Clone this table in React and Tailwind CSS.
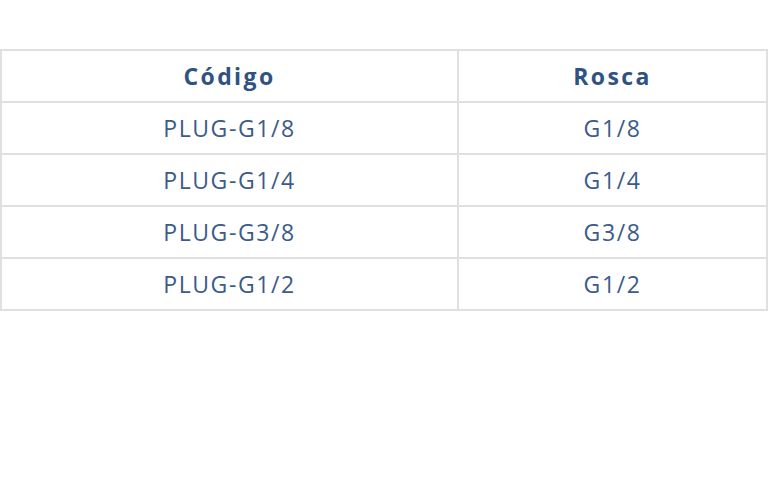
import React from 'react';

const rows = [
  ['PLUG-G1/8', 'G1/8'],
  ['PLUG-G1/4', 'G1/4'],
  ['PLUG-G3/8', 'G3/8'],
  ['PLUG-G1/2', 'G1/2'],
];

const App = () => {
  return (
    <div className="w-[768px] h-[497px] bg-white pt-[49px]" style={{ fontFamily: '"Open Sans", "Liberation Sans", sans-serif' }}>
      <table className="w-full border-collapse table-fixed">
        <colgroup>
          <col className="w-[457px]" />
          <col />
        </colgroup>
        <thead>
          <tr className="h-[52px]">
            <th className="border-2 border-[#e0e0e0] text-[23px] font-bold tracking-[2.4px] text-[#2f5283]">Código</th>
            <th className="border-2 border-[#e0e0e0] text-[23px] font-bold tracking-[2.4px] text-[#2f5283]">Rosca</th>
          </tr>
        </thead>
        <tbody>
          {rows.map(([code, thread]) => (
            <tr key={code} className="h-[52px]">
              <td className="border-2 border-[#e0e0e0] text-center text-[23px] tracking-[1.6px] text-[#3b5b8b]">{code}</td>
              <td className="border-2 border-[#e0e0e0] text-center text-[23px] tracking-[1.6px] text-[#3b5b8b]">{thread}</td>
            </tr>
          ))}
        </tbody>
      </table>
    </div>
  );
};

export default App;
